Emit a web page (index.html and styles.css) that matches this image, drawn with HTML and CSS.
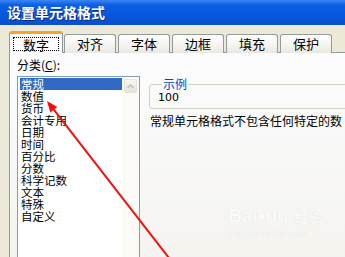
FILE: index.html
```html
<!DOCTYPE html>
<html lang="zh-CN">
<head>
    <meta charset="UTF-8">
    <title>设置单元格格式</title>
    <link rel="stylesheet" href="styles.css">
</head>
<body>
    <div class="window">
        <div class="titlebar">设置单元格格式</div>
        <div class="client">
            <div class="tabs">
                <div class="tab active"><span class="focus">数字</span></div>
                <div class="tab">对齐</div>
                <div class="tab">字体</div>
                <div class="tab">边框</div>
                <div class="tab">填充</div>
                <div class="tab">保护</div>
            </div>
            <div class="panel">
                <div class="category">
                    <div class="label">分类(<u>C</u>):</div>
                    <div class="listbox">
                        <ul class="items">
                            <li class="selected">常规</li>
                            <li>数值</li>
                            <li>货币</li>
                            <li>会计专用</li>
                            <li>日期</li>
                            <li>时间</li>
                            <li>百分比</li>
                            <li>分数</li>
                            <li>科学记数</li>
                            <li>文本</li>
                            <li>特殊</li>
                            <li>自定义</li>
                        </ul>
                        <div class="scrollbar">
                            <div class="scroll-btn">
                                <svg width="7" height="5" viewBox="0 0 7 5"><path d="M0.5 4 L3.5 1 L6.5 4" fill="none" stroke="#c2c0b8" stroke-width="1.6"/></svg>
                            </div>
                        </div>
                    </div>
                </div>
                <div class="detail">
                    <fieldset class="sample">
                        <legend>示例</legend>
                        <div class="sample-value">100</div>
                    </fieldset>
                    <p class="desc">常规单元格格式不包含任何特定的数</p>
                </div>
            </div>
        </div>

        <!-- annotation arrow over the screenshot -->
        <svg class="pointer" width="345" height="257" viewBox="0 0 345 257">
            <line x1="169" y1="258" x2="53.8" y2="109.7" stroke="#f01010" stroke-width="2"/>
            <polygon points="47,101 57.3,106.9 50.3,112.5" fill="#f01010"/>
        </svg>

        <div class="watermark">
            <div class="wm-logo">Bai<span class="paw">●</span>du <span class="wm-cn">经验</span></div>
            <div class="wm-url">jingyan.baidu.com</div>
        </div>
    </div>
</body>
</html>
```

FILE: styles.css
```css
* {
    margin: 0;
    padding: 0;
    box-sizing: border-box;
}

body {
    width: 345px;
    height: 257px;
    overflow: hidden;
    background: #ece9d8;
    font-family: "Noto Sans CJK SC", "DejaVu Sans", sans-serif;
    font-size: 12px;
    color: #000;
}

.window {
    position: relative;
    width: 345px;
    height: 257px;
    overflow: hidden;
}

/* XP style caption */
.titlebar {
    height: 25px;
    padding: 3px 0 0 7px;
    background: linear-gradient(#3d86f4 0%, #0a5fe6 20%, #0456dc 70%, #0a50c8 100%);
    color: #fff;
    font-size: 14px;
    font-weight: bold;
    line-height: 18px;
    text-shadow: 1px 1px 0 #0a2a80;
}

.client {
    padding: 6px 0 0 9px;
}

.tabs {
    display: flex;
    align-items: flex-end;
    height: 22px;
    position: relative;
    z-index: 2;
}

.tab {
    height: 19px;
    margin-right: 2px;
    border: 1px solid #919b9c;
    border-bottom: none;
    border-radius: 3px 3px 0 0;
    background: linear-gradient(#fefefe, #f4f3ee 60%, #e8e7e0);
    font-size: 13px;
    line-height: 18px;
    text-align: center;
    width: 52px;
}

.tab.active {
    width: 54px;
    height: 22px;
    margin-right: 1px;
    background: #fcfcfe;
    border-top: 3px solid #f0a628;
    border-radius: 3px 3px 0 0;
    padding-top: 2px;
}

.focus {
    display: inline-block;
    width: 46px;
    height: 14px;
    line-height: 13px;
    border: 1px dotted #000;
}

.panel {
    display: flex;
    height: 220px;
    margin-top: -1px;
    border-top: 1px solid #919b9c;
    border-left: 1px solid #919b9c;
    background: linear-gradient(#fcfcfe, #f4f3ee);
}

.category {
    flex: none;
    padding: 5px 0 0 7px;
    width: 139px;
}

.label {
    height: 18px;
    line-height: 13px;
}

.listbox {
    display: flex;
    width: 123px;
    height: 200px;
    border: 1px solid #7f9db9;
    background: #fff;
    padding: 1px 1px 0 2px;
}

.items {
    list-style: none;
    flex: 1;
    font-size: 11.5px;
}

.items li {
    height: 12px;
    line-height: 12px;
    padding-left: 1px;
}

.items li.selected {
    background: #316ac5;
    color: #fff;
}

.scrollbar {
    width: 17px;
    margin: -1px -1px 0 0;
    background: #fbfaf6;
    padding: 2px 2px 0 2px;
}

.scroll-btn {
    height: 14px;
    border: 1px solid #e4e2d8;
    border-radius: 2px;
    background: linear-gradient(#f7f6f1, #e6e4da);
    display: flex;
    align-items: center;
    justify-content: center;
}

.detail {
    padding-top: 19px;
    min-width: 0;
    flex: 1;
}

.sample {
    width: 220px;
    height: 31px;
    border: 1px solid #d0d0bf;
    border-radius: 3px;
    padding: 0 0 0 8px;
    margin-top: 6px;
}

.sample legend {
    color: #0046d5;
    padding: 0 1px;
    margin-left: 4px;
    line-height: 12px;
}

.sample-value {
    font-family: "DejaVu Sans", sans-serif;
    font-size: 11px;
    line-height: 14px;
    margin-top: 1px;
}

.desc {
    margin-top: 6px;
    margin-left: 1px;
    white-space: nowrap;
    line-height: 12px;
}

.pointer {
    position: absolute;
    left: 0;
    top: 0;
    z-index: 5;
}

.watermark {
    position: absolute;
    left: 228px;
    top: 205px;
    color: rgba(255, 255, 255, 0.9);
    text-shadow: 0 0 1px rgba(0, 0, 0, 0.12);
    z-index: 4;
}

.wm-logo {
    font-family: "Liberation Sans", sans-serif;
    font-weight: bold;
    font-size: 19px;
    line-height: 22px;
}

.paw {
    font-size: 13px;
    vertical-align: top;
}

.wm-cn {
    font-family: "Noto Sans CJK SC", sans-serif;
    font-size: 15px;
}

.wm-url {
    font-family: "Liberation Serif", serif;
    font-size: 10px;
    line-height: 14px;
    letter-spacing: 0.3px;
}
```
